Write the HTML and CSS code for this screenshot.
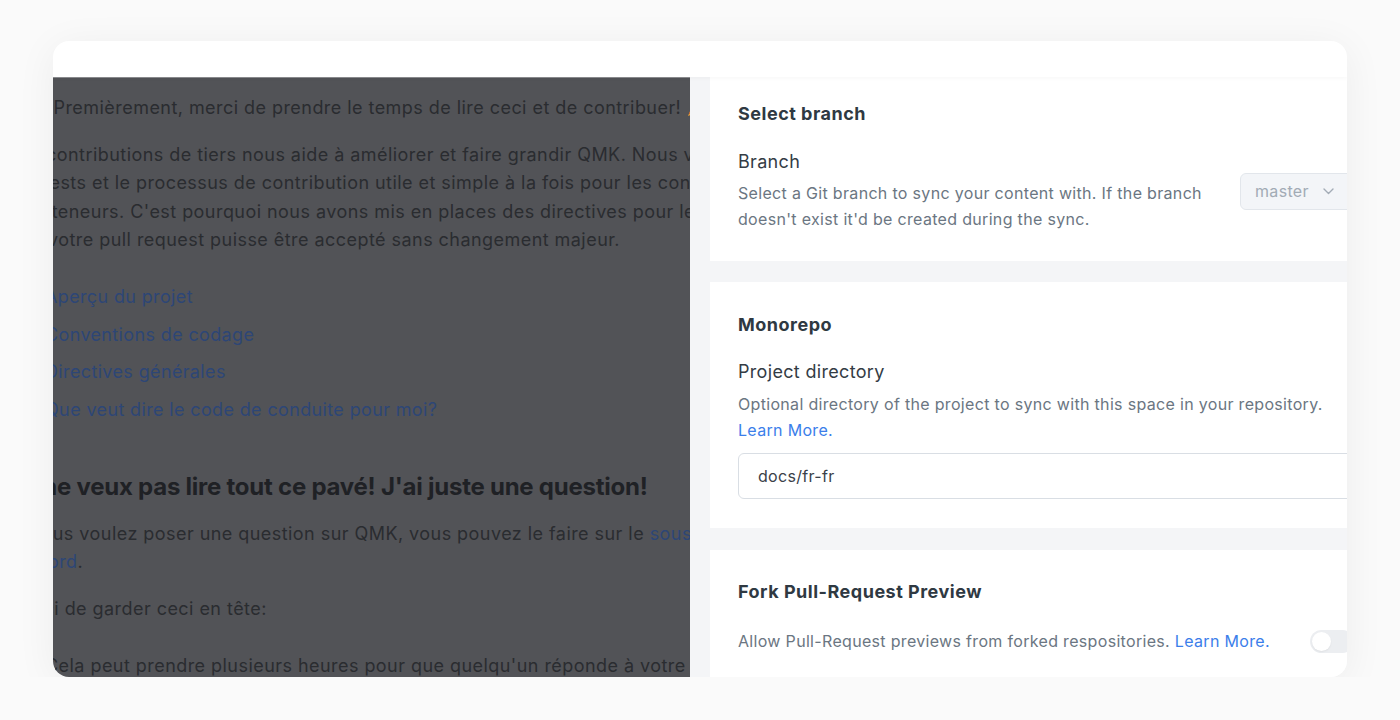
FILE: index.html
```html
<!DOCTYPE html>
<html lang="fr">
<head>
<meta charset="utf-8">
<title>Git Sync settings</title>
<link rel="stylesheet" href="styles.css">
</head>
<body>
<div class="card">
  <div class="topbar"></div>
  <div class="main">
    <div class="doc">
      <div class="doc-inner">
        <p class="intro">Premièrement, merci de prendre le temps de lire ceci et de contribuer! <svg class="emoji" width="18" height="18" viewBox="0 0 18 18"><path d="M1 17 L6 5 L13 12 Z" fill="#e8a13a"/><path d="M2 15 L4 10 L8 14 Z" fill="#c9552c"/><circle cx="10" cy="3" r="1.4" fill="#3b7be0"/><circle cx="15" cy="6" r="1.2" fill="#d94b8a"/><rect x="12" y="1" width="2" height="3" fill="#56b04c"/></svg></p>
        <p>Les contributions de tiers nous aide à améliorer et faire grandir QMK. Nous voulons rendre les pull<br>requests et le processus de contribution utile et simple à la fois pour les contributeurs et les<br>mainteneurs. C'est pourquoi nous avons mis en places des directives pour les contributeurs afin<br>que votre pull request puisse être accepté sans changement majeur.</p>
        <ul class="toc">
          <li><a href="#">Aperçu du projet</a></li>
          <li><a href="#">Conventions de codage</a></li>
          <li><a href="#">Directives générales</a></li>
          <li><a href="#">Que veut dire le code de conduite pour moi?</a></li>
        </ul>
        <h2>Je ne veux pas lire tout ce pavé! J'ai juste une question!</h2>
        <p>Si vous voulez poser une question sur QMK, vous pouvez le faire sur le <a href="#">sous-reddit OLKB</a> ou sur<br><a href="#">Discord</a>.</p>
        <p>Merci de garder ceci en tête:</p>
        <ul class="notes">
          <li>Cela peut prendre plusieurs heures pour que quelqu'un réponde à votre question.</li>
        </ul>
      </div>
    </div>
    <div class="settings">
      <section class="section first">
        <h3>Select branch</h3>
        <div class="row">
          <div class="field">
            <div class="field-label">Branch</div>
            <div class="desc">Select a Git branch to sync your content with. If the branch<br>doesn't exist it'd be created during the sync.</div>
          </div>
          <div class="select">
            <span>master</span>
            <svg width="11" height="7" viewBox="0 0 11 7"><path d="M1 1 L5.5 5.5 L10 1" fill="none" stroke="#a3acb6" stroke-width="1.4" stroke-linecap="round" stroke-linejoin="round"/></svg>
          </div>
        </div>
      </section>
      <section class="section">
        <h3>Monorepo</h3>
        <div class="field-label">Project directory</div>
        <div class="desc">Optional directory of the project to sync with this space in your repository.<br><a href="#">Learn More.</a></div>
        <input class="text-input" type="text" value="docs/fr-fr">
      </section>
      <section class="section">
        <h3>Fork Pull-Request Preview</h3>
        <div class="row">
          <div class="desc">Allow Pull-Request previews from forked respositories. <a href="#">Learn More.</a></div>
          <div class="toggle"><span class="knob"></span></div>
        </div>
      </section>
    </div>
  </div>
</div>
</body>
</html>
```
FILE: styles.css
```css
body {
  margin: 0;
  background: #fafafa;
  font-family: Inter, "Noto Sans", sans-serif;
  letter-spacing: 0.02em;
}

.card {
  width: 1294px;
  height: 636px;
  margin: 41px 0 0 53px;
  background: #ffffff;
  border-radius: 16px;
  box-shadow: 0 6px 40px rgba(0, 0, 0, 0.06);
  overflow: hidden;
  display: flex;
  flex-direction: column;
}

.topbar {
  height: 36px;
  flex: none;
  position: relative;
  z-index: 1;
  box-shadow: 0 1px 5px rgba(0, 0, 0, 0.04);
}

.main {
  flex: 1;
  display: flex;
  min-height: 0;
}

/* dimmed document on the left */
.doc {
  width: 637px;
  flex: none;
  background: #525357;
  box-shadow: inset 0 1px 0 #8b8c8f;
  overflow: hidden;
  white-space: nowrap;
  color: #2a2c30;
  font-size: 18px;
  line-height: 28.35px;
  letter-spacing: 0.025em;
}

.doc-inner {
  margin-left: -44px;
  padding-top: 16.7px;
}

.doc p {
  margin: 0 0 19px;
}

.doc .intro {
  text-indent: 44.5px;
}

.emoji {
  vertical-align: -3px;
}

.doc ul {
  list-style: none;
  margin: 28.3px 0 0;
  padding-left: 36px;
}

.doc li {
  margin-bottom: 9.5px;
}

.doc .toc {
  letter-spacing: 0.02em;
}

.doc a {
  color: #2d4676;
  text-decoration: none;
}

.doc h2 {
  font-size: 24px;
  line-height: 32px;
  font-weight: 700;
  letter-spacing: -0.01em;
  color: #1f2125;
  margin: 46.5px 0 16.5px;
}

/* settings panel */
.settings {
  flex: 1;
  min-width: 0;
  background: #f4f5f7;
  padding-left: 20px;
  overflow: hidden;
  display: flex;
  flex-direction: column;
  gap: 21.5px;
}

.section {
  width: 672px;
  flex: none;
  box-sizing: border-box;
  background: #ffffff;
  padding: 30.7px 28px 29.4px;
}

.section.first {
  padding-top: 25px;
  padding-bottom: 27.7px;
}

.section h3 {
  margin: 0 0 23.6px;
  font-size: 18px;
  line-height: 24px;
  font-weight: 700;
  letter-spacing: 0.028em;
  color: #2f3942;
}

.field-label {
  font-size: 18px;
  line-height: 24px;
  color: #343c45;
  margin-bottom: 6.4px;
}

.desc {
  font-size: 16px;
  line-height: 26.5px;
  color: #6b7682;
}

.desc a {
  color: #3b7eea;
  text-decoration: none;
}

.row {
  display: flex;
  align-items: center;
  justify-content: space-between;
}

.select {
  width: 114px;
  height: 37px;
  box-sizing: border-box;
  border: 1px solid #e2e6eb;
  border-radius: 6px;
  background: #f3f5f8;
  display: flex;
  align-items: center;
  gap: 14px;
  padding-left: 14px;
  font-size: 16px;
  color: #a2abb5;
}

.text-input {
  display: block;
  width: 100%;
  height: 46px;
  margin-top: 9px;
  box-sizing: border-box;
  border: 1px solid #d9dee4;
  border-radius: 6px;
  padding: 0 19px;
  font: inherit;
  font-size: 16px;
  letter-spacing: 0.02em;
  color: #3a4149;
  background: #ffffff;
  outline: none;
}

.toggle {
  width: 44px;
  height: 23px;
  box-sizing: border-box;
  padding: 2px;
  border-radius: 12px;
  background: #eceef1;
  display: flex;
  align-items: center;
}

.knob {
  width: 19px;
  height: 19px;
  border-radius: 50%;
  background: #ffffff;
  box-shadow: 0 1px 2px rgba(0, 0, 0, 0.06);
}
```
